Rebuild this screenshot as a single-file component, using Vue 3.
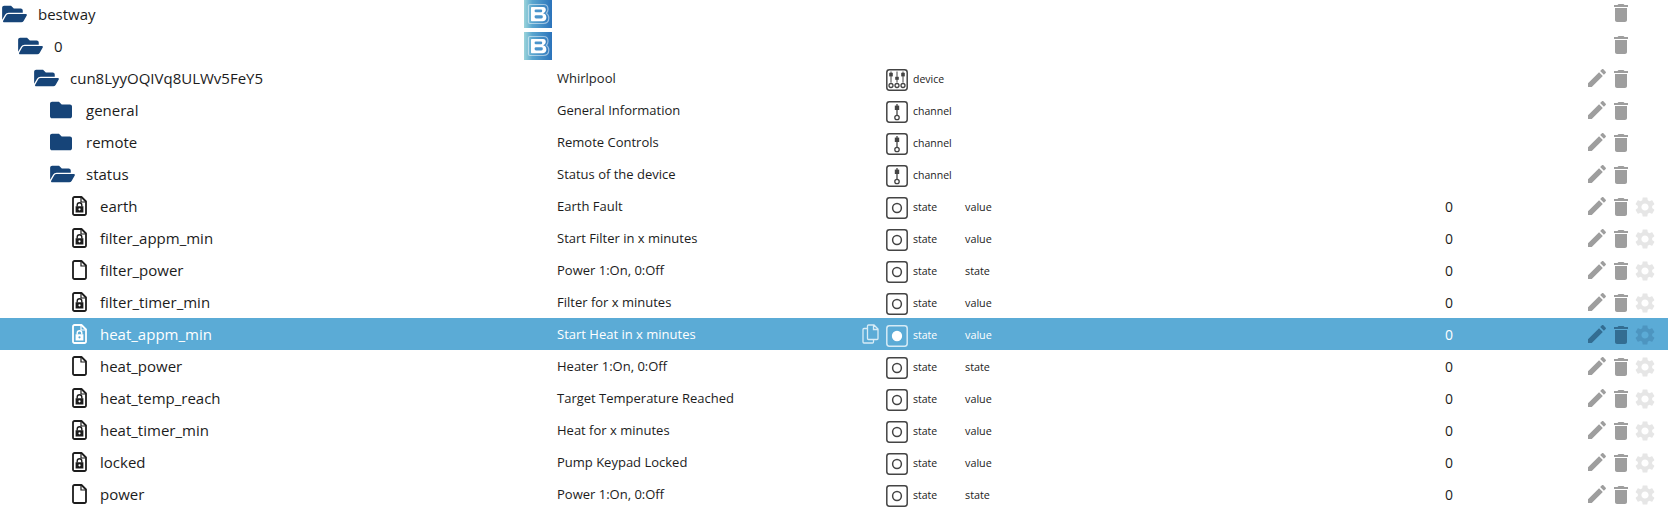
<script setup>
const folderOpen = 'M572.694 292.093L500.27 416.248A63.997 63.997 0 0 1 444.989 448H45.025c-18.523 0-30.064-20.093-20.731-36.093l72.424-124.155A64 64 0 0 1 152 256h399.964c18.523 0 30.064 20.093 20.73 36.093zM152 224h328v-48c0-26.51-21.49-48-48-48H272l-64-64H48C21.49 64 0 85.49 0 112v278.046l69.077-118.418C86.214 242.25 117.989 224 152 224z'
const folderClosed = 'M464 128H272l-64-64H48C21.49 64 0 85.49 0 112v288c0 26.51 21.49 48 48 48h416c26.51 0 48-21.49 48-48V176c0-26.51-21.49-48-48-48z'
const pencil = 'M3 17.25V21h3.75L17.81 9.94l-3.75-3.75L3 17.25zM20.71 7.04c.39-.39.39-1.02 0-1.41l-2.34-2.34c-.39-.39-1.02-.39-1.41 0l-1.83 1.83 3.75 3.75 1.83-1.83z'
const trash = 'M6 19c0 1.1.9 2 2 2h8c1.1 0 2-.9 2-2V7H6v12zM19 4h-3.5l-1-1h-5l-1 1H5v2h14V4z'
const gear = 'M19.14 12.94c.04-.3.06-.61.06-.94 0-.32-.02-.64-.07-.94l2.03-1.58c.18-.14.23-.41.12-.61l-1.92-3.32c-.12-.22-.37-.29-.59-.22l-2.39.96c-.5-.38-1.03-.7-1.62-.94l-.36-2.54c-.04-.24-.24-.41-.48-.41h-3.84c-.24 0-.43.17-.47.41l-.36 2.54c-.59.24-1.13.57-1.62.94l-2.39-.96c-.22-.08-.47 0-.59.22L2.74 8.87c-.12.21-.08.47.12.61l2.03 1.58c-.05.3-.09.63-.09.94s.02.64.07.94l-2.03 1.58c-.18.14-.23.41-.12.61l1.92 3.32c.12.22.37.29.59.22l2.39-.96c.5.38 1.03.7 1.62.94l.36 2.54c.05.24.24.41.48.41h3.84c.24 0 .44-.17.47-.41l.36-2.54c.59-.24 1.13-.56 1.62-.94l2.39.96c.22.08.47 0 .59-.22l1.92-3.32c.12-.22.07-.47-.12-.61l-2.01-1.58zM12 15.6c-1.98 0-3.6-1.62-3.6-3.6s1.62-3.6 3.6-3.6 3.6 1.62 3.6 3.6-1.62 3.6-3.6 3.6z'

const rows = [
  { name: 'bestway', level: 0, icon: 'open', logo: true, top: true },
  { name: '0', level: 1, icon: 'open', logo: true, top: true },
  { name: 'cun8LyyOQIVq8ULWv5FeY5', level: 2, icon: 'open', desc: 'Whirlpool', type: 'device', edit: true },
  { name: 'general', level: 3, icon: 'closed', desc: 'General Information', type: 'channel', edit: true },
  { name: 'remote', level: 3, icon: 'closed', desc: 'Remote Controls', type: 'channel', edit: true },
  { name: 'status', level: 3, icon: 'open', desc: 'Status of the device', type: 'channel', edit: true },
  { name: 'earth', level: 4, icon: 'lock', desc: 'Earth Fault', type: 'state', role: 'value' },
  { name: 'filter_appm_min', level: 4, icon: 'lock', desc: 'Start Filter in x minutes', type: 'state', role: 'value' },
  { name: 'filter_power', level: 4, icon: 'file', desc: 'Power 1:On, 0:Off', type: 'state', role: 'state' },
  { name: 'filter_timer_min', level: 4, icon: 'lock', desc: 'Filter for x minutes', type: 'state', role: 'value' },
  { name: 'heat_appm_min', level: 4, icon: 'lock', desc: 'Start Heat in x minutes', type: 'state', role: 'value', selected: true },
  { name: 'heat_power', level: 4, icon: 'file', desc: 'Heater 1:On, 0:Off', type: 'state', role: 'state' },
  { name: 'heat_temp_reach', level: 4, icon: 'lock', desc: 'Target Temperature Reached', type: 'state', role: 'value' },
  { name: 'heat_timer_min', level: 4, icon: 'lock', desc: 'Heat for x minutes', type: 'state', role: 'value' },
  { name: 'locked', level: 4, icon: 'lock', desc: 'Pump Keypad Locked', type: 'state', role: 'value' },
  { name: 'power', level: 4, icon: 'file', desc: 'Power 1:On, 0:Off', type: 'state', role: 'state' },
]
</script>

<template>
  <div class="tree">
    <div
      v-for="row in rows"
      :key="row.name + row.level"
      class="row"
      :class="{ selected: row.selected, top: row.top }"
    >
      <div class="name-cell" :style="{ paddingLeft: 2 + row.level * 16 + 'px' }">
        <svg v-if="row.icon === 'open'" class="ic-folder" viewBox="0 0 576 512"><path :d="folderOpen" /></svg>
        <svg v-else-if="row.icon === 'closed'" class="ic-folder closed" viewBox="0 0 512 512"><path :d="folderClosed" /></svg>
        <svg v-else class="ic-file" viewBox="0 0 15 20">
          <path class="sheet" d="M2.5 1H9.5L14 5.5V17.5A1.5 1.5 0 0 1 12.5 19H2.5A1.5 1.5 0 0 1 1 17.5V2.5A1.5 1.5 0 0 1 2.5 1Z" />
          <path class="fold" d="M9 1.5V6H13.5" />
          <template v-if="row.icon === 'lock'">
            <path class="lock-body" fill-rule="evenodd" d="M3.6 10.3H11.4V16.6H3.6ZM7.5 12.2A1.1 1.1 0 1 0 7.5 14.4A1.1 1.1 0 1 0 7.5 12.2Z" />
            <path class="lock-arc" d="M5.2 10.5V9A2.3 2.3 0 0 1 9.8 9V10.5" />
          </template>
        </svg>
        <span class="name">{{ row.name }}</span>
      </div>
      <div class="logo-cell">
        <svg v-if="row.logo" class="logo" viewBox="0 0 28 28">
          <defs>
            <linearGradient id="logoGrad" x1="0" x2="1" y1="0" y2="0">
              <stop offset="0" stop-color="#9bd4da" />
              <stop offset=".3" stop-color="#5aa6cf" />
              <stop offset="1" stop-color="#2b73bb" />
            </linearGradient>
          </defs>
          <rect width="28" height="28" fill="url(#logoGrad)" />
          <path d="M6 4.5H19.5C22.5 4.5 24 6.6 24 9.2C24 11 23.3 12.4 22.2 13.3C23.7 14.2 24.8 15.8 24.8 18C24.8 21.3 22.6 23.5 19.2 23.5H6C5 23.5 4.5 23 4.5 22V6C4.5 5 5 4.5 6 4.5Z" fill="none" stroke="#fff" stroke-opacity=".5" stroke-width="1.2" stroke-linejoin="round" />
          <path d="M8 7H19C21 7 21.8 8.2 21.8 9.8C21.8 11.5 20.6 12.8 19 13.3C21 13.6 22.4 15.2 22.4 17.4C22.4 19.8 20.8 21.2 18.6 21.2H8C7.4 21.2 7 20.8 7 20.2V8C7 7.4 7.4 7 8 7Z" fill="#fff" />
          <rect x="10.6" y="9.6" width="7.6" height="2.6" rx="1.2" fill="#4a94cb" />
          <rect x="10.6" y="15.2" width="8.2" height="3.2" rx="1.4" fill="#4a94cb" />
        </svg>
      </div>
      <div class="desc-cell">
        <span class="desc">{{ row.desc }}</span>
        <svg v-if="row.selected" class="ic-copy" viewBox="0 0 17 20">
          <path d="M6.5 1H12L16 5V14.5A1 1 0 0 1 15 15.5H6.5A1 1 0 0 1 5.5 14.5V2A1 1 0 0 1 6.5 1ZM11.5 1.2V5.5H15.8M5.5 4.5H2A1 1 0 0 0 1 5.5V18A1 1 0 0 0 2 19H10.5A1 1 0 0 0 11.5 18V15.5" />
        </svg>
      </div>
      <div class="type-cell">
        <svg v-if="row.type" class="ic-type" viewBox="0 0 22 22">
          <rect class="frame" x=".8" y=".8" width="20.4" height="20.4" rx="2.6" />
          <circle v-if="row.type === 'state'" class="dot" cx="11" cy="11" r="4.4" />
          <template v-else-if="row.type === 'channel'">
            <path class="line" d="M11 3V14.5" />
            <rect class="knob" x="8.8" y="4.6" width="4.4" height="4.4" />
            <circle class="ring" cx="11" cy="16.5" r="2.2" />
          </template>
          <template v-else>
            <path class="line thin" d="M5 2.5V13.5M11 2.5V13.5M17 2.5V13.5" />
            <rect class="knob" x="3.2" y="3.8" width="3.6" height="3.6" />
            <rect class="knob" x="9.2" y="7.8" width="3.6" height="3" />
            <rect class="knob" x="15.2" y="3.8" width="3.6" height="3.6" />
            <circle class="ring" cx="5" cy="16.5" r="2" />
            <circle class="ring" cx="11" cy="16.5" r="2" />
            <circle class="ring" cx="17" cy="16.5" r="2" />
          </template>
        </svg>
        <span v-if="row.type" class="type">{{ row.type }}</span>
      </div>
      <div class="role-cell">{{ row.role }}</div>
      <div class="value-cell">{{ row.role ? '0' : '' }}</div>
      <div class="actions">
        <svg v-if="row.edit || row.role" class="act act-edit" viewBox="0 0 24 24"><path :d="pencil" /></svg>
        <svg class="act act-trash" viewBox="0 0 24 24"><path :d="trash" /></svg>
        <svg v-if="row.role" class="act act-gear" viewBox="0 0 24 24"><path :d="gear" /></svg>
      </div>
    </div>
  </div>
</template>

<style>
html, body { background: #fff; overflow: hidden; }
</style>

<style scoped>
.tree {
  margin-top: -2px;
  font-family: "Open Sans", "Noto Sans", sans-serif;
  color: #1c1c1c;
}
.row {
  display: flex;
  align-items: center;
  height: 32px;
  width: 1668px;
}
.row.selected { background: #5babd6; color: #fff; }
.name-cell {
  flex: none;
  width: 524px;
  box-sizing: border-box;
  display: flex;
  align-items: center;
}
.ic-folder {
  flex: none;
  width: 25px;
  height: 22px;
  margin-right: 11px;
  fill: #164478;
}
.ic-folder.closed { width: 22px; margin-right: 14px; }
.ic-file {
  flex: none;
  width: 15px;
  height: 20px;
  margin-left: 6px;
  margin-right: 13px;
  color: #1c1c1c;
}
.selected .ic-file { color: #fff; }
.sheet { fill: none; stroke: currentColor; stroke-width: 1.8; stroke-linejoin: round; }
.fold { fill: none; stroke: currentColor; stroke-width: 1.2; }
.lock-body { fill: currentColor; }
.lock-arc { fill: none; stroke: currentColor; stroke-width: 1.4; }
.name { font-size: 15px; line-height: 20px; }
.logo-cell {
  flex: none;
  width: 33px;
  height: 28px;
}
.logo { display: block; width: 28px; height: 28px; }
.desc-cell {
  flex: none;
  width: 329px;
  box-sizing: border-box;
  padding-right: 7px;
  display: flex;
  align-items: center;
  justify-content: space-between;
}
.desc { font-size: 13px; }
.ic-copy {
  width: 17px;
  height: 20px;
  fill: none;
  stroke: #d8ecf6;
  stroke-width: 1.3;
}
.type-cell {
  flex: none;
  width: 79px;
  display: flex;
  align-items: center;
  padding-top: 3px;
  box-sizing: border-box;
}
.ic-type { flex: none; width: 22px; height: 22px; margin-right: 5px; color: #444; }
.selected .ic-type { color: #d6ebf6; }
.frame { fill: none; stroke: currentColor; stroke-width: 1.5; }
.dot { fill: none; stroke: currentColor; stroke-width: 1.5; }
.selected .dot { fill: #fff; stroke: #fff; }
.line { stroke: currentColor; stroke-width: 1.3; fill: none; }
.knob { fill: currentColor; }
.ring { fill: none; stroke: currentColor; stroke-width: 1.3; }
.thin { stroke-width: 1; }
.type { font-size: 10.5px; margin-top: -2px; }
.role-cell {
  flex: none;
  width: 480px;
  font-size: 10.8px;
}
.value-cell {
  flex: none;
  width: 30px;
  font-size: 14px;
}
.actions {
  margin-left: auto;
  width: 73px;
  margin-right: 11px;
  display: flex;
  align-items: flex-start;
  height: 24px;
  padding-top: 2px;
}
.act { flex: none; width: 24px; height: 24px; }
.act-edit { fill: #9e9e9e; margin-top: -1px; margin-left: 1px; }
.act-trash { fill: #9e9e9e; margin-left: auto; margin-right: 24px; }
.act-edit + .act-trash { margin-left: 0; }
.act-edit + .act-trash + .act-gear { margin-left: -24px; }
.top .act-trash { transform: translateY(-2px); }
.act-gear { fill: #e6e6e6; }
.selected .act-edit, .selected .act-trash { fill: #336d92; }
.selected .act-gear { fill: #4d95c0; }
</style>
